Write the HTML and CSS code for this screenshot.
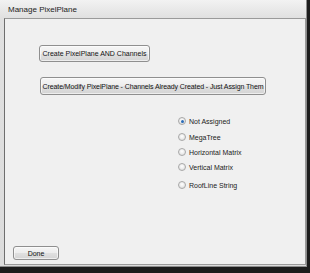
FILE: index.html
```html
<!DOCTYPE html>
<html lang="en">
<head>
    <meta charset="UTF-8">
    <title>Manage PixelPlane</title>
    <link rel="stylesheet" href="styles.css">
</head>
<body>
    <div class="window">
        <div class="titlebar">Manage PixelPlane</div>
        <div class="client">
            <button class="btn btn-create">Create PixelPlane AND Channels</button>
            <button class="btn btn-assign">Create/Modify PixelPlane - Channels Already Created - Just Assign Them</button>

            <!-- tipo de elemento -->
            <div class="radios">
                <label class="radio checked"><span class="dot"></span>Not Assigned</label>
                <label class="radio"><span class="dot"></span>MegaTree</label>
                <label class="radio"><span class="dot"></span>Horizontal Matrix</label>
                <label class="radio"><span class="dot"></span>Vertical Matrix</label>
                <label class="radio last"><span class="dot"></span>RoofLine String</label>
            </div>

            <button class="btn btn-done">Done</button>
        </div>
    </div>
</body>
</html>
```

FILE: styles.css
```css
:root {
    --frame: #e4e4e4;
    --client: #f0f0f0;
    --text: #1a1a1a;
}
body, html {
    margin: 0;
    padding: 0;
    height: 100%;
    background-color: #1c1c1c;
    font-family: 'Liberation Sans', Arial, sans-serif;
    color: var(--text);
}
.window {
    width: 304px;
    height: 266px;
    background: linear-gradient(to bottom, #f2f2f2 0, #e0e0e0 18px, #dcdcdc 100%);
    border-right: 1px solid #8c8c8c;
    border-bottom: 1px solid #8c8c8c;
    padding: 0 0 0 2px;
    display: flex;
    flex-direction: column;
}
.titlebar {
    height: 18px;
    line-height: 19px;
    padding-left: 6px;
    font-size: 8px;
    color: #222;
}
.client {
    flex-grow: 1;
    margin: 0 0 1px 2px;
    background-color: var(--client);
    border: 1px solid #9a9a9a;
    border-left-color: #6e6e6e;
    display: flex;
    flex-direction: column;
    align-items: flex-start;
    padding: 0 0 4px 0;
    box-sizing: border-box;
}
.btn {
    font-family: 'Liberation Sans', Arial, sans-serif;
    font-size: 7px;
    color: #111;
    background: linear-gradient(to bottom, #f6f6f6 0%, #ededed 50%, #e0e0e0 51%, #d4d4d4 100%);
    border: 1px solid #8f8f8f;
    border-radius: 3px;
    padding: 0;
    box-shadow: inset 0 0 0 1px rgba(255,255,255,0.6);
}
.btn-create {
    margin: 26px 0 0 34px;
    width: 111px;
    height: 17px;
}
.btn-assign {
    margin: 15px 0 0 35px;
    width: 226px;
    height: 18px;
    letter-spacing: -0.1px;
}
.radios {
    margin: 22px 0 0 173px;
    display: flex;
    flex-direction: column;
    gap: 7px;
}
.radio {
    display: flex;
    align-items: center;
    gap: 3px;
    font-size: 7px;
    height: 8px;
    color: #222;
}
.radio:first-child {
    margin-bottom: 1px;
}
.radio.last {
    margin-top: 3px;
}
.dot {
    width: 6px;
    height: 6px;
    border-radius: 50%;
    border: 1px solid #a8a8a8;
    background: radial-gradient(circle at 50% 40%, #ffffff 0, #e4e4e4 70%);
    display: inline-flex;
    align-items: center;
    justify-content: center;
}
.radio.checked .dot::after {
    content: '';
    width: 3px;
    height: 3px;
    border-radius: 50%;
    background: #2a6cb8;
}
.btn-done {
    margin: auto 0 0 8px;
    width: 46px;
    height: 14px;
}
```
